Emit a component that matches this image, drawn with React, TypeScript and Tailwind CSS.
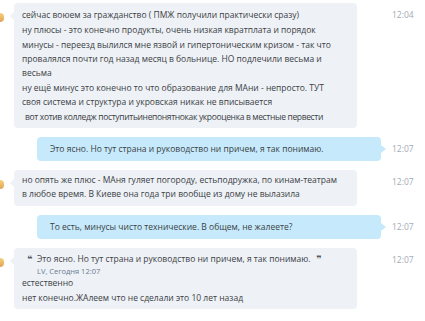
import React from 'react';

function Avatar() {
  return (
    <div className="w-[4px] h-[9px] mt-[10px] rounded-r-full bg-gradient-to-b from-[#f3c65a] to-[#d98b2b] opacity-80" />
  );
}

function Time({ t, className }: { t: string; className: string }) {
  return <div className={`text-[8.5px] leading-[14px] text-[#a3abb6] pt-[5px] ${className}`}>{t}</div>;
}

function Incoming({ time, children, pt = 'pt-[5px]', pb = 'pb-[4px]' }: { time: string; children: React.ReactNode; pt?: string; pb?: string }) {
  return (
    <div className="flex items-start">
      <div className="w-[14px] shrink-0 flex">
        <Avatar />
      </div>
      <div className={`relative w-[343px] shrink-0 bg-[#eef1f6] rounded-[4px] px-[8px] ${pt} ${pb}`}>
        <div className="absolute left-[-4px] top-[9px] w-0 h-0 border-y-[4px] border-y-transparent border-r-[4px] border-r-[#eef1f6]" />
        {children}
      </div>
      <Time t={time} className="ml-[35px]" />
    </div>
  );
}

function Outgoing({ time, children }: { time: string; children: React.ReactNode }) {
  return (
    <div className="flex items-start">
      <div className="w-[37px] shrink-0" />
      <div className="relative w-[344px] shrink-0 bg-[#c6eafb] rounded-[4px] pl-[13px] pr-[8px] py-[5px]">
        <div className="absolute right-[-5px] top-[8px] w-0 h-0 border-y-[4px] border-y-transparent border-l-[5px] border-l-[#c6eafb]" />
        {children}
      </div>
      <Time t={time} className="ml-[11px]" />
    </div>
  );
}

// paragraph broken where the screenshot breaks it
function Lines({ lines, className = '' }: { lines: string[]; className?: string }) {
  return (
    <p className={`whitespace-nowrap ${className}`}>
      {lines.map((l, i) => (
        <span key={i} className="block">
          {l}
        </span>
      ))}
    </p>
  );
}

export default function App() {
  return (
    <div
      className="w-[425px] h-[321px] bg-white overflow-hidden pt-[3px] flex flex-col gap-[9px] text-[#3b3f45] text-[8.5px] leading-[14px]"
      style={{ fontFamily: '"Open Sans", "Noto Sans", sans-serif' }}
    >
      <Incoming time="12:04">
        <div className="flex flex-col gap-[1px]">
          <Lines lines={['сейчас воюем за гражданство ( ПМЖ получили практически сразу)']} />
          <Lines lines={['ну плюсы - это конечно продукты, очень низкая квратплата и порядок']} />
          <Lines
            lines={[
              'минусы - переезд вылился мне язвой и гипертоническим кризом - так что',
              'провалялся почти год назад месяц в больнице. НО подлечили весьма и',
              'весьма',
            ]}
          />
          <Lines
            lines={[
              'ну ещё минус это конечно то что образование для МАни - непросто. ТУТ',
              'своя система и структура и укровская никак не вписывается',
            ]}
          />
          <Lines
            className="pl-[3px] tracking-[-0.35px]"
            lines={['вот хотив колледж поступитьинепонятнокак укрооценка в местные первести']}
          />
        </div>
      </Incoming>

      <Outgoing time="12:07">
        <p>Это ясно. Но тут страна и руководство ни причем, я так понимаю.</p>
      </Outgoing>

      <Incoming time="12:07" pt="pt-[3px]" pb="pb-[5px]">
        <Lines
          lines={[
            'но опять же плюс - МАня гуляет погороду, естьподружка, по кинам-театрам',
            'в любое время. В Киеве она года три вообще из дому не вылазила',
          ]}
        />
      </Incoming>

      <Outgoing time="12:07">
        <p>То есть, минусы чисто технические. В общем, не жалеете?</p>
      </Outgoing>

      <Incoming time="12:07" pt="pt-[4px]" pb="pb-[4px]">
        <div className="flex items-start pl-[5px]">
          <span
            className="w-[10px] shrink-0 text-[9px] font-bold text-[#4a4f57] leading-[14px]"
            style={{ fontFamily: '"DejaVu Sans", sans-serif' }}
          >
            ❝
          </span>
          <div className="flex flex-col">
            <p>
              Это ясно. Но тут страна и руководство ни причем, я так понимаю.
              <span
                className="ml-[6px] text-[9px] font-bold text-[#4a4f57]"
                style={{ fontFamily: '"DejaVu Sans", sans-serif' }}
              >
                ❞
              </span>
            </p>
            <p className="text-[7.5px] leading-[10px] text-[#6b7b91]">LV, Сегодня 12:07</p>
          </div>
        </div>
        <div className="flex flex-col gap-[1px]">
          <p>естественно</p>
          <p>нет конечно.ЖАлеем что не сделали это 10 лет назад</p>
        </div>
      </Incoming>
    </div>
  );
}
